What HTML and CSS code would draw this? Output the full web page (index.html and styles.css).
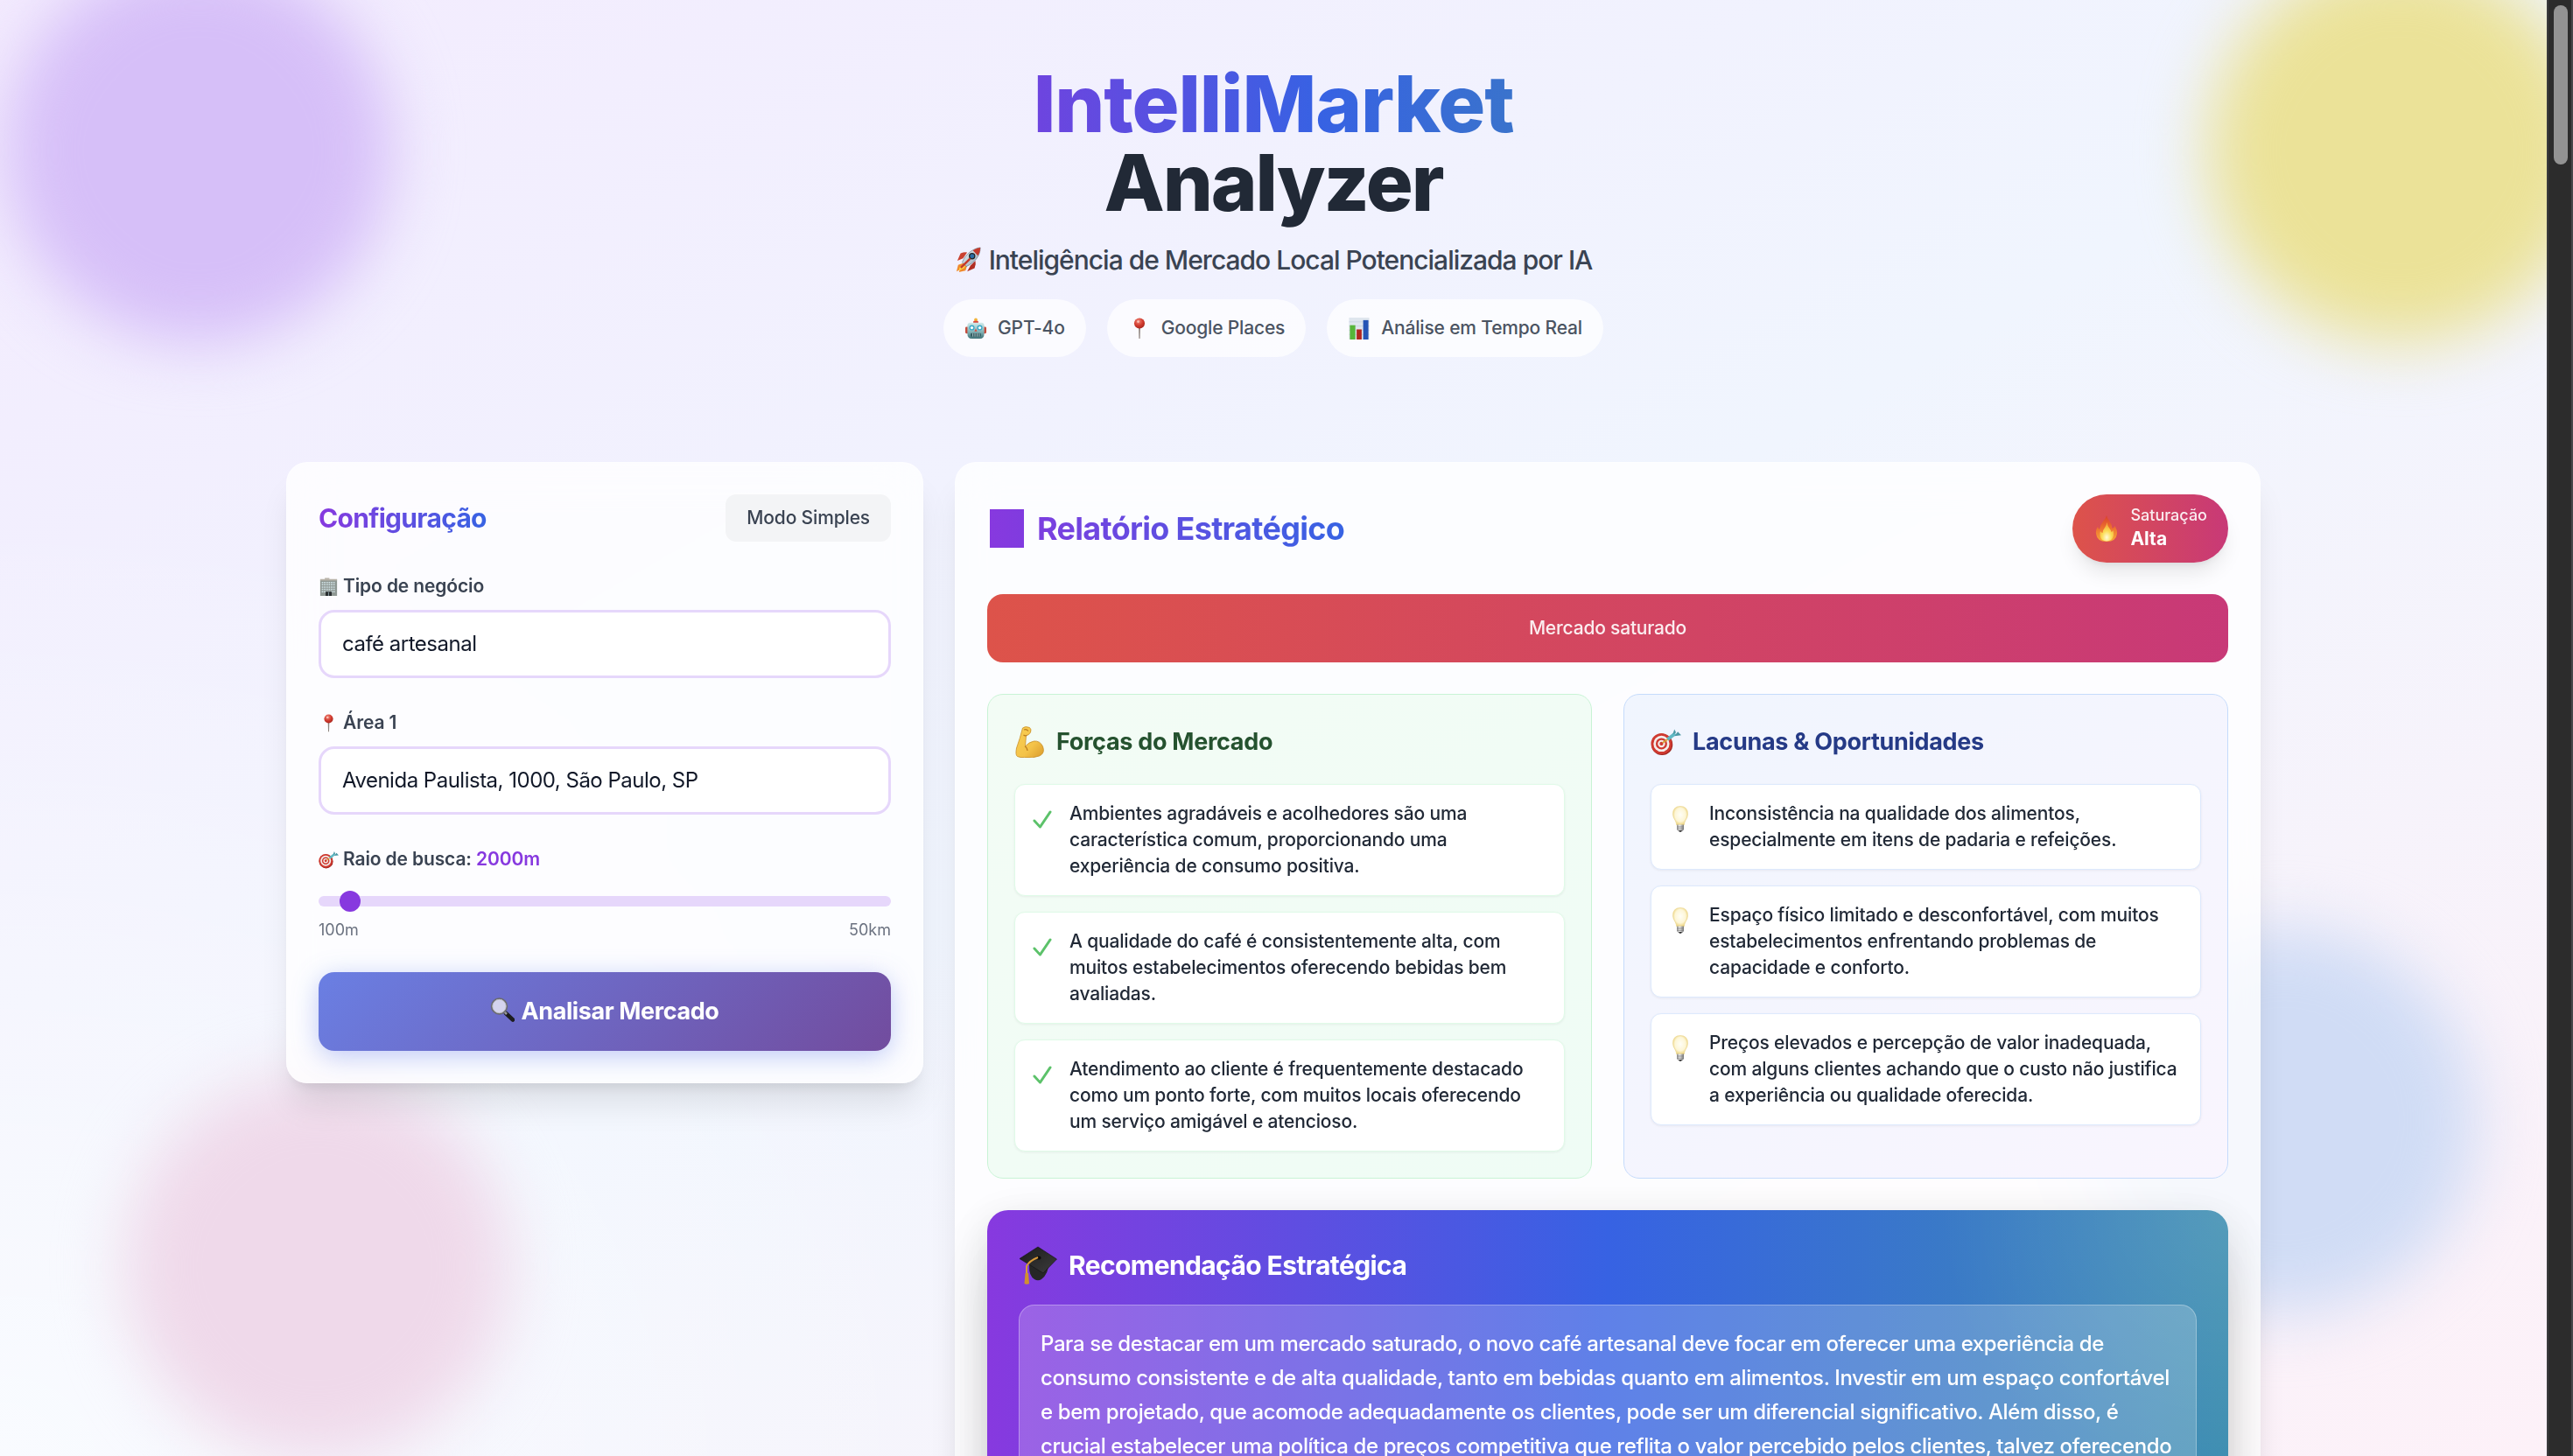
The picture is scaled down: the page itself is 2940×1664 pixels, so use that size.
FILE: index.html
```html
<!DOCTYPE html>
<html lang="pt-BR">
<head>
<meta charset="utf-8">
<title>IntelliMarket Analyzer</title>
<link rel="stylesheet" href="styles.css">
</head>
<body>
<svg class="sprite" width="0" height="0" aria-hidden="true">
  <defs>
    <radialGradient id="g-red" cx=".4" cy=".3" r=".8"><stop offset="0" stop-color="#f28b7c"/><stop offset=".5" stop-color="#d23c30"/><stop offset="1" stop-color="#9c1f18"/></radialGradient>
    <linearGradient id="g-robot" x1="0" y1="0" x2="0" y2="1"><stop offset="0" stop-color="#d3ecec"/><stop offset=".6" stop-color="#7fb0b3"/><stop offset="1" stop-color="#3c6f74"/></linearGradient>
    <linearGradient id="g-fire" x1="0" y1="0" x2="0" y2="1"><stop offset="0" stop-color="#d9402c"/><stop offset=".5" stop-color="#ee7330"/><stop offset="1" stop-color="#f7a93a"/></linearGradient>
    <radialGradient id="g-flame" cx=".5" cy=".8" r=".7"><stop offset="0" stop-color="#fffbd8"/><stop offset=".5" stop-color="#fbdc55"/><stop offset="1" stop-color="#f4a53a"/></radialGradient>
    <radialGradient id="g-bulb" cx=".5" cy=".45" r=".55"><stop offset="0" stop-color="#fffef6"/><stop offset=".65" stop-color="#fdf6d6"/><stop offset="1" stop-color="#ecd27c"/></radialGradient>
    <linearGradient id="g-metal"><stop offset="0" stop-color="#8d8d8d"/><stop offset=".4" stop-color="#efefef"/><stop offset="1" stop-color="#777"/></linearGradient>
    <linearGradient id="g-arm" x1="0" y1="0" x2="1" y2="1"><stop offset="0" stop-color="#f9cf52"/><stop offset=".6" stop-color="#f4c349"/><stop offset="1" stop-color="#d99a2b"/></linearGradient>
    <linearGradient id="g-cap" x1="0" y1="0" x2="1" y2="1"><stop offset="0" stop-color="#1b1b1b"/><stop offset="1" stop-color="#3c3c3c"/></linearGradient>
    <linearGradient id="g-rocket" x1="0" y1="0" x2="1" y2="1"><stop offset="0" stop-color="#f4f8fa"/><stop offset="1" stop-color="#8fa6b5"/></linearGradient>
  </defs>
  <symbol id="rocket" viewBox="0 0 32 32">
    <path d="M9 14 2 17 6 8q5-2 8-1z" fill="#c9402f"/><path d="M18 23 14 30l9-4q2-5 1-9z" fill="#b02e22"/>
    <path d="M9 20 3 22l-2 8 4-2-1 3 8-2 2-6z" fill="#f08a2c"/><path d="M9 22l-4 3-1 4 6-3 2-3z" fill="#fbe04a"/>
    <path d="M30 1C21 2 12 9 8 19l5 5c9-4 17-12 17-23z" fill="url(#g-rocket)" stroke="#5e7482" stroke-width=".7"/>
    <path d="M30 1c-4 .4-7 2-9 3.500L27 11c1.600-2.500 3-6 3-10z" fill="#c5392c"/>
    <circle cx="20" cy="11.500" r="3.300" fill="#2a6ea6" stroke="#222" stroke-width="1.300"/>
    <path d="M17 15 7 25" stroke="#c5392c" stroke-width="2.600" stroke-linecap="round"/>
  </symbol>
  <symbol id="robot" viewBox="0 0 26 26">
    <circle cx="13" cy="2.500" r="2" fill="#f2b23a"/><rect x="10" y="4" width="6" height="3" rx="1" fill="#d9463a"/>
    <rect x=".5" y="11" width="4" height="8" rx="1.500" fill="#c64b3c"/><rect x="21.500" y="11" width="4" height="8" rx="1.500" fill="#c64b3c"/>
    <path d="M6 6h14q3 0 3 4v9q0 6-5 6H8q-5 0-5-6v-9q0-4 3-4z" fill="url(#g-robot)"/>
    <circle cx="8.300" cy="12" r="3.200" fill="#3ba9c9"/><circle cx="17.700" cy="12" r="3.200" fill="#3ba9c9"/><circle cx="8.300" cy="12" r="1.700" fill="#fff"/><circle cx="17.700" cy="12" r="1.700" fill="#fff"/>
    <path d="M13 13l-1.600 3.500h3.200z" fill="#d9463a"/><rect x="7" y="18.500" width="12" height="4" rx="1" fill="#2f575c"/><path d="M9.500 18.500v4M12 18.500v4M14.500 18.500v4M17 18.500v4" stroke="#cfe4e4" stroke-width=".8"/>
  </symbol>
  <symbol id="pin" viewBox="0 0 26 26">
    <path d="M12 11h2l-.4 14h-1.200z" fill="#8f8580"/><circle cx="13" cy="6.800" r="6.300" fill="url(#g-red)"/><circle cx="11.500" cy="4.800" r="1.500" fill="#f9c0b5"/>
  </symbol>
  <symbol id="chart" viewBox="0 0 26 26">
    <rect x="1" y="0" width="24" height="26" fill="#dfe6ee"/><path d="M1 5h24M1 10h24M1 15h24M1 20h24" stroke="#c2cede" stroke-width=".7"/>
    <rect x="2" y="9" width="6.500" height="17" fill="#57b53a"/><rect x="10" y="14" width="6" height="12" fill="#b3261f"/><rect x="17.800" y="3" width="6.200" height="23" fill="#2554b5"/>
  </symbol>
  <symbol id="building" viewBox="0 0 24 24">
    <path d="M1 3h22v21H1z" fill="#8f9894"/><path d="M1 2h6V.5h6V2h10v2H1z" fill="#b9b3aa"/>
    <path d="M3 6.500h18M3 9.500h18M3 12.500h18M3 15.500h18M3 18.500h18" stroke="#cfe0e4" stroke-width="1.800" stroke-dasharray="2 1"/>
    <path d="M8 18.500h8V24H8z" fill="#2b2f31"/><path d="M12 19v5" stroke="#8ba0a5"/>
  </symbol>
  <symbol id="target" viewBox="0 0 36 32">
    <ellipse cx="13.500" cy="19" rx="12.500" ry="12.500" fill="#9d221c"/><circle cx="12.800" cy="18" r="12.300" fill="#cf3a30"/><circle cx="12.800" cy="18" r="9.400" fill="#f4efec"/><circle cx="12.800" cy="18" r="6.700" fill="#cf3a30"/><circle cx="12.800" cy="18" r="4.300" fill="#f4efec"/><circle cx="12.800" cy="18" r="2.200" fill="#cf3a30"/>
    <path d="M14 17 24 10" stroke="#d8a63a" stroke-width="1.800"/><path d="M20 13 29 6" stroke="#5fb9c4" stroke-width="4"/><path d="M26 7 28 1l2 4zM28 9l8-1-4-4z" fill="#4b98a4"/>
  </symbol>
  <symbol id="lens" viewBox="0 0 28 28">
    <path d="M18 18 26 25.500" stroke="#1d1d1f" stroke-width="4.600" stroke-linecap="round"/><path d="M16 16l3 3" stroke="#999" stroke-width="2.500"/>
    <circle cx="10.500" cy="10" r="8.800" fill="#d5d4ee" stroke="#6b6b70" stroke-width="1.800"/><circle cx="10.500" cy="10" r="7.700" fill="none" stroke="#b9b9bd" stroke-width=".8"/>
  </symbol>
  <symbol id="arm" viewBox="0 0 34 36">
    <path d="M9 2Q12-.5 17 1.500q2.500 2 1 5.500-2 3.500-5 3.500-.5 6-1 12.500 4-5 10-6 7-.5 10 6 3 8-4 11-8 3-17 1.500-5 .5-8-1Q.5 33 2 25 6 14 9 2z" fill="url(#g-arm)" stroke="#c98f29" stroke-width=".8"/>
    <path d="M11.500 23q2.500 1 3 5M10.500 4q3-1 5 1.500M10 10q2 1.500 4 .5" stroke="#b97a1e" stroke-width="1.200" fill="none"/>
  </symbol>
  <symbol id="fire" viewBox="0 0 26 30">
    <path d="M13 0q.5 3 3.500 7 3 4 3 8 2.500-1 3-3 3 5 2.500 9-1 9-12 9T1 21q-.5-5 2-8 .5 2 2 3 .5-5 4-9 3.500-4 4-7z" fill="url(#g-fire)"/>
    <path d="M13.500 8q.5 4 3 7 2 2.500 2 4 1.500-.5 2-2 1 3 .5 6-1.500 6.500-8 6.500T5.500 23q-.5-3 .5-5 1 2 2.500 2 0-3 2.500-6 2-3 2.500-6z" fill="url(#g-flame)"/>
  </symbol>
  <symbol id="bulb" viewBox="0 0 18 30">
    <path d="M9 .5q8.500 0 8.500 9 0 3.500-2.500 7-1.500 2.500-1.800 5.500H4.800Q4.500 19 3 16.500.5 13 .5 9.500.5.5 9 .5z" fill="url(#g-bulb)" stroke="#ead48a" stroke-width=".6"/>
    <path d="M5 21.500h8v5.500q-1 2.500-4 2.500T5 27z" fill="url(#g-metal)"/><path d="M5 24h8M5.200 26.300h7.600" stroke="#777" stroke-width=".7"/><path d="M7 28h4l-1 1.700H8z" fill="#333"/>
  </symbol>
  <symbol id="cap" viewBox="0 0 44 44">
    <path d="M12 22q-.5 12 6 16 4 2.500 8 0 8-6 8.500-19z" fill="#262626"/>
    <path d="M22 1 43.500 15 28 31 1 14.500z" fill="url(#g-cap)" stroke="#111" stroke-width=".6"/>
    <ellipse cx="22.500" cy="13.500" rx="3" ry="2" fill="#0c0c0c"/><path d="M22 13Q12 17 9 23v11" fill="none" stroke="#d99b3a" stroke-width="2"/>
    <path d="M7.500 31h3.500l1 12q-3 1.500-5.500 0z" fill="#d0912f"/>
  </symbol>
  <symbol id="check" viewBox="0 0 22 22"><path d="M1.500 12.500 8.300 20 20.500 2" fill="none" stroke="#5cc26a" stroke-width="3" stroke-linecap="round" stroke-linejoin="round"/></symbol>
</svg>

<div class="window">
  <main class="page">
    <div class="blob blob-purple"></div>
    <div class="blob blob-yellow"></div>
    <div class="blob blob-pink"></div>
    <div class="blob blob-blue"></div>

    <header class="hero">
      <h1 class="hero-title"><span class="hero-brand">IntelliMarket</span><span class="hero-sub">Analyzer</span></h1>
      <p class="tagline"><svg class="i-rocket"><use href="#rocket"/></svg><span>Inteligência de Mercado Local Potencializada por IA</span></p>
      <div class="pills">
        <span class="pill"><svg class="i-pill"><use href="#robot"/></svg><span>GPT-4o</span></span>
        <span class="pill"><svg class="i-pill"><use href="#pin"/></svg><span>Google Places</span></span>
        <span class="pill"><svg class="i-pill"><use href="#chart"/></svg><span>Análise em Tempo Real</span></span>
      </div>
    </header>

    <div class="layout">
      <section class="card config">
        <div class="config-head">
          <h2 class="config-title">Configuração</h2>
          <button class="mode">Modo Simples</button>
        </div>
        <div class="field">
          <label class="label"><svg class="i-label"><use href="#building"/></svg><span>Tipo de negócio</span></label>
          <div class="input">café artesanal</div>
        </div>
        <div class="field">
          <label class="label"><svg class="i-label"><use href="#pin"/></svg><span>Área 1</span></label>
          <div class="input">Avenida Paulista, 1000, São Paulo, SP</div>
        </div>
        <div class="field">
          <label class="label"><svg class="i-label"><use href="#target"/></svg><span>Raio de busca: <b class="radius-value">2000m</b></span></label>
          <div class="range"><span class="range-thumb"></span></div>
          <div class="range-ends"><span>100m</span><span>50km</span></div>
        </div>
        <button class="analyze"><svg class="i-lens"><use href="#lens"/></svg><span>Analisar Mercado</span></button>
      </section>

      <section class="card report">
        <div class="report-head">
          <h2 class="report-title"><span class="title-block"></span><span>Relatório Estratégico</span></h2>
          <div class="badge">
            <svg class="i-fire"><use href="#fire"/></svg>
            <div class="badge-text"><span class="badge-label">Saturação</span><strong class="badge-value">Alta</strong></div>
          </div>
        </div>
        <div class="banner">Mercado saturado</div>
        <div class="panels">
          <div class="panel panel-green">
            <h3 class="panel-title"><svg class="i-panel"><use href="#arm"/></svg><span>Forças do Mercado</span></h3>
            <ul class="items">
              <li class="item"><svg class="i-check"><use href="#check"/></svg><span>Ambientes agradáveis e acolhedores são uma<br>característica comum, proporcionando uma<br>experiência de consumo positiva.</span></li>
              <li class="item"><svg class="i-check"><use href="#check"/></svg><span>A qualidade do café é consistentemente alta, com<br>muitos estabelecimentos oferecendo bebidas bem<br>avaliadas.</span></li>
              <li class="item"><svg class="i-check"><use href="#check"/></svg><span>Atendimento ao cliente é frequentemente destacado<br>como um ponto forte, com muitos locais oferecendo<br>um serviço amigável e atencioso.</span></li>
            </ul>
          </div>
          <div class="panel panel-blue">
            <h3 class="panel-title"><svg class="i-panel"><use href="#target"/></svg><span>Lacunas &amp; Oportunidades</span></h3>
            <ul class="items">
              <li class="item"><svg class="i-bulb"><use href="#bulb"/></svg><span>Inconsistência na qualidade dos alimentos,<br>especialmente em itens de padaria e refeições.</span></li>
              <li class="item"><svg class="i-bulb"><use href="#bulb"/></svg><span>Espaço físico limitado e desconfortável, com muitos<br>estabelecimentos enfrentando problemas de<br>capacidade e conforto.</span></li>
              <li class="item"><svg class="i-bulb"><use href="#bulb"/></svg><span>Preços elevados e percepção de valor inadequada,<br>com alguns clientes achando que o custo não justifica<br>a experiência ou qualidade oferecida.</span></li>
            </ul>
          </div>
        </div>
        <div class="advice">
          <h3 class="advice-title"><svg class="i-cap"><use href="#cap"/></svg><span>Recomendação Estratégica</span></h3>
          <div class="advice-body"><p>Para se destacar em um mercado saturado, o novo café artesanal deve focar em oferecer uma experiência de<br>consumo consistente e de alta qualidade, tanto em bebidas quanto em alimentos. Investir em um espaço confortável<br>e bem projetado, que acomode adequadamente os clientes, pode ser um diferencial significativo. Além disso, é<br>crucial estabelecer uma política de preços competitiva que reflita o valor percebido pelos clientes, talvez oferecendo</p></div>
        </div>
      </section>
    </div>
  </main>
  <div class="scrollbar"><span class="scrollbar-thumb"></span></div>
</div>
</body>
</html>
```
FILE: styles.css
```css
* { box-sizing: border-box; margin: 0; padding: 0; }
body { font-family: Inter, "Noto Sans", sans-serif; font-size: 24px; line-height: 36px; color: #1f2937; overflow: hidden; -webkit-font-smoothing: antialiased; }
button { font: inherit; border: 0; }
ul { list-style: none; }
svg { display: block; flex: none; overflow: visible; }
.sprite { position: absolute; }

.window { display: flex; width: 2940px; height: 1664px; overflow: hidden; }
.page { position: relative; flex: 1; height: 1664px; overflow: hidden; background: radial-gradient(ellipse 1300px 1100px at 0 100%, rgba(255,255,255,.6), rgba(255,255,255,0)), linear-gradient(to bottom right, #f3ebfe, #f0f5fe 50%, #fdf1f8); }
.scrollbar { width: 30px; background: #2c2c2c; border-left: 2px solid #3b3b3d; border-right: 2px solid #474749; padding: 6px 4px 0 6px; }
.scrollbar-thumb { display: block; width: 16px; height: 182px; border-radius: 8px; background: #939393; }

/* Blurred background bubbles */
.blob { position: absolute; width: 440px; height: 440px; border-radius: 50%; filter: blur(36px); }
.blob-purple { left: 7px; top: -48px; background: #d6bff8; }
.blob-yellow { left: 2522px; top: -48px; background: #ebe298; }
.blob-pink { left: 142px; top: 1228px; background: #efd9ea; }
.blob-blue { left: 2390px; top: 1061px; background: #d0dcf5; }

/* Header */
.hero { position: relative; padding: 74px 0 72px; display: flex; flex-direction: column; align-items: center; }
.hero-title { display: flex; flex-direction: column; align-items: center; font-size: 90px; line-height: 90px; font-weight: 800; margin-bottom: 22px; }
.hero-brand { letter-spacing: -1.15px; background: linear-gradient(90deg, #6e44df, #3762e3 60%, #3a73cc); -webkit-background-clip: text; background-clip: text; color: transparent; }
.hero-sub { color: #212936; letter-spacing: -2.1px; }
.tagline { display: flex; align-items: center; gap: 7px; font-size: 30px; line-height: 42px; font-weight: 500; letter-spacing: -1px; color: #3a4352; margin-bottom: 24px; }
.i-rocket { width: 32px; height: 30px; }
.pills { display: flex; gap: 24px; }
.pill { display: flex; align-items: center; gap: 12px; height: 66px; padding: 0 24px; border-radius: 33px; background: rgba(255,255,255,.7); font-size: 21px; line-height: 30px; font-weight: 500; letter-spacing: -.17px; color: #4b5462; }
.i-pill { width: 26px; height: 25px; }

/* Two-column layout */
.layout { position: relative; width: 2256px; margin: 48px auto 0; display: grid; grid-template-columns: 728px 1492px; gap: 36px; align-items: start; }
.card { background: rgba(255,255,255,.8); border: 1px solid rgba(255,255,255,.3); border-radius: 24px; padding: 36px; backdrop-filter: blur(24px); box-shadow: 0 30px 38px -8px rgba(0,0,0,.1), 0 12px 15px -9px rgba(0,0,0,.1); }

.config-head { display: flex; justify-content: space-between; align-items: center; margin-bottom: 36px; }
.config-title { font-size: 30px; line-height: 42px; font-weight: 700; letter-spacing: -.7px; background: linear-gradient(90deg, #8739df, #3763e3); -webkit-background-clip: text; background-clip: text; color: transparent; }
.mode { height: 54px; padding: 12px 24px; border-radius: 12px; background: #f3f4f6; color: #3a4352; font-size: 21px; line-height: 30px; font-weight: 500; letter-spacing: -.15px; }
.field { margin-bottom: 36px; }
.label { display: flex; align-items: center; gap: 5px; font-size: 21px; line-height: 30px; font-weight: 600; letter-spacing: -.13px; color: #3a4352; margin-bottom: 12px; }
.i-label { width: 23px; height: 21px; }
.input { height: 78px; border: 3px solid #e6d7fb; border-radius: 18px; background: rgba(255,255,255,.9); padding: 18px 24px; letter-spacing: -.5px; color: #111828; }
.radius-value { font-weight: 600; color: #8739df; }
.range { margin-top: 27px; height: 12px; border-radius: 6px; background: #e6d7fb; padding-left: 24px; }
.range-thumb { display: block; width: 24px; height: 24px; border-radius: 50%; background: #8739df; transform: translateY(-6px); }
.range-ends { display: flex; justify-content: space-between; margin-top: 15px; font-size: 18px; line-height: 24px; color: #6b7280; }
.analyze { width: 100%; height: 90px; border-radius: 18px; display: flex; align-items: center; justify-content: center; gap: 7px; color: #fff; font-size: 27px; font-weight: 700; letter-spacing: -.4px; background: linear-gradient(135deg, #6a7fe3, #724c9e); box-shadow: 0 6px 30px rgba(102,126,234,.42); }
.i-lens { width: 28px; height: 28px; margin-top: -4px; }

/* Report */
.report { height: 1400px; }
.report-head { display: flex; justify-content: space-between; align-items: center; margin-bottom: 36px; }
.report-title { display: flex; align-items: center; gap: 15px; padding-left: 3px; font-size: 36px; line-height: 48px; font-weight: 700; letter-spacing: -.7px; background: linear-gradient(90deg, #8739df, #3763e3); -webkit-background-clip: text; background-clip: text; color: transparent; }
.title-block { width: 39px; height: 44px; background: linear-gradient(90deg, #8739df, #803bdf); }
.badge { display: flex; align-items: center; gap: 12px; height: 78px; padding: 12px 24px; border-radius: 39px; color: #fff; background: linear-gradient(90deg, #dd534a, #c83977); box-shadow: 0 15px 23px -5px rgba(0,0,0,.1), 0 6px 9px -6px rgba(0,0,0,.1); }
.i-fire { width: 30px; height: 30px; }
.badge-text { display: flex; flex-direction: column; }
.badge-label { font-size: 18px; line-height: 24px; font-weight: 500; opacity: .9; }
.badge-value { font-size: 21px; line-height: 30px; font-weight: 700; }
.banner { height: 78px; border-radius: 18px; display: flex; align-items: center; justify-content: center; margin-bottom: 36px; background: linear-gradient(90deg, #dd534a, #c83977); color: rgba(255,255,255,.9); font-size: 21px; line-height: 30px; font-weight: 500; letter-spacing: -.2px; }
.panels { display: grid; grid-template-columns: 1fr 1fr; gap: 36px; margin-bottom: 36px; }
.panel { border: 1px solid; border-radius: 18px; padding: 30px; }
.panel-green { border-color: #c8f3d5; background: linear-gradient(to bottom right, #f3fcf5, #effcf5); }
.panel-blue { border-color: #c5dbfb; background: linear-gradient(to bottom right, #f0f5fe, #f9f5fe); }
.panel-title { display: flex; align-items: center; gap: 13px; height: 48px; margin-bottom: 24px; font-size: 27px; font-weight: 700; letter-spacing: -.3px; color: #25522f; }
.panel-blue .panel-title { color: #253a86; }
.i-panel { width: 35px; height: 36px; }
.items { display: flex; flex-direction: column; gap: 18px; }
.item { display: flex; align-items: flex-start; padding: 18px; border: 1px solid #e0fbe8; border-radius: 12px; background: #fff; box-shadow: 0 1px 3px rgba(0,0,0,.06); font-size: 21px; line-height: 30px; font-weight: 500; letter-spacing: -.16px; color: #212936; white-space: nowrap; }
.panel-blue .item { border-color: #dde9fd; }
.i-check { width: 22px; height: 21px; margin: 11px 20px 0 2px; }
.i-bulb { width: 18px; height: 30px; margin: 6px 24px 0 6px; }
.advice { border-radius: 24px; padding: 36px; height: 420px; background: radial-gradient(circle 330px at 1418px 0, rgba(255,255,255,.13), rgba(255,255,255,0)), linear-gradient(90deg, #8739df, #3762e3 50%, #3c8db0); box-shadow: 0 38px 75px -18px rgba(0,0,0,.25), 0 12px 45px rgba(0,0,0,.1); }
.advice-title { display: flex; align-items: center; gap: 13px; height: 54px; margin-bottom: 18px; color: #fff; font-size: 30px; font-weight: 700; letter-spacing: -.6px; }
.i-cap { width: 44px; height: 44px; }
.advice-body { height: 320px; border: 1px solid rgba(255,255,255,.3); border-radius: 18px; background: rgba(255,255,255,.2); padding: 24px; color: #fff; font-weight: 500; line-height: 39px; letter-spacing: -.4px; white-space: nowrap; }
```
